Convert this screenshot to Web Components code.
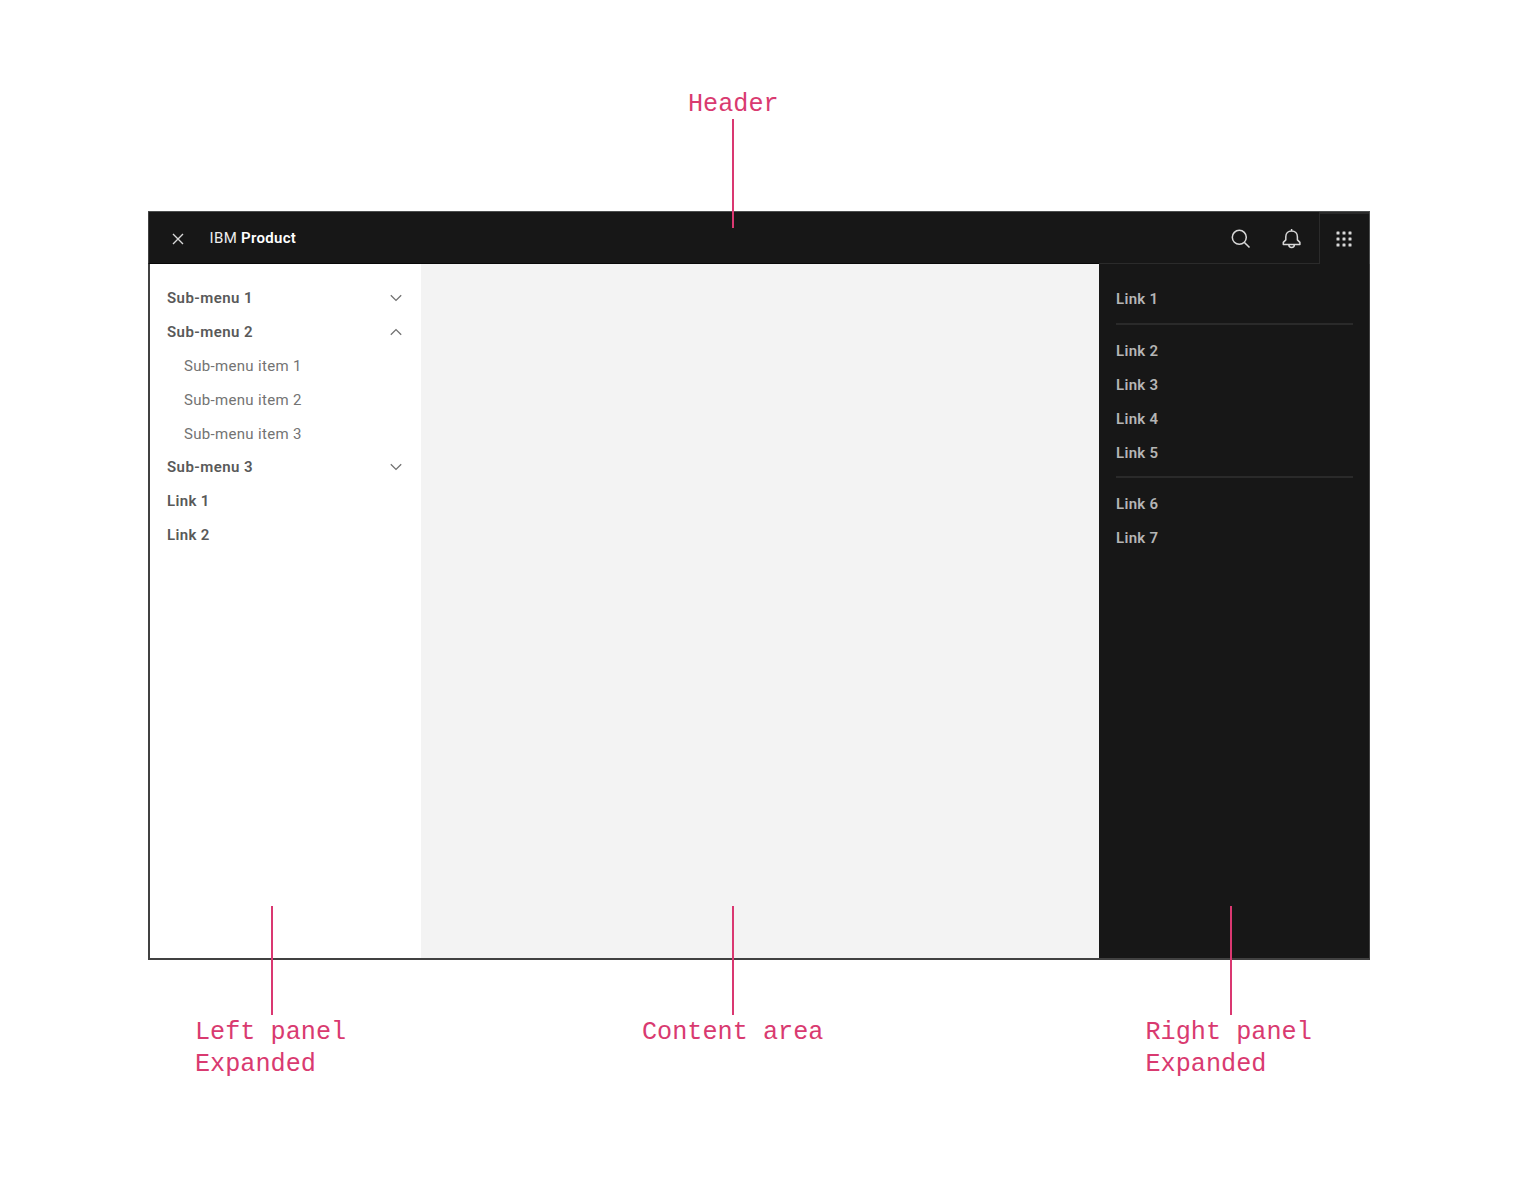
<!DOCTYPE html>
<html lang="en">
<head>
<meta charset="utf-8">
<title>UI shell anatomy</title>
<style>
body{margin:0;background:#fff;font-family:Roboto,"Liberation Sans",sans-serif}
</style>
</head>
<body>
<shell-anatomy></shell-anatomy>
<script>
const define = (name, html, ready) => customElements.define(name, class extends HTMLElement {
  constructor() {
    super();
    this.attachShadow({ mode: 'open' }).innerHTML = html;
  }
  connectedCallback() { if (ready) ready(this, this.shadowRoot); }
});

// Text whose tracking is spread so that the line takes the width in "span".
define('tracked-text', `<style>
  :host{display:inline-block;white-space:pre;flex:none}
  span{display:inline-block}
</style><span><slot></slot></span>`, (el, root) => {
  const s = root.querySelector('span');
  const n = el.textContent.length;
  s.style.letterSpacing = ((+el.getAttribute('span') - s.getBoundingClientRect().width) / n) + 'px';
});

const icons = {
  close: '<svg width="12" height="12" viewBox="0 0 12 12"><path d="M1 1l10 10M11 1L1 11" stroke-width="1.4"/></svg>',
  down: '<svg width="12" height="8" viewBox="0 0 12 8"><path d="M.8 1.3L6 6.4l5.2-5.1" stroke-width="1.3"/></svg>',
  up: '<svg width="12" height="8" viewBox="0 0 12 8"><path d="M.8 6.7L6 1.6l5.2 5.1" stroke-width="1.3"/></svg>',
  search: '<svg width="20" height="20" viewBox="0 0 20 20"><circle cx="8.3" cy="8.3" r="7" stroke-width="1.5"/><path d="M13.2 13.2l5.3 5.3" stroke-width="1.6"/></svg>',
  bell: '<svg width="20" height="20" viewBox="0 0 20 20"><path d="M9.6 0v1.9M9.6 1.9c-3.4 0-5.8 2.5-5.8 5.8v3.2l-2.5 2.5v2h16.6v-2l-2.5-2.5V7.7c0-3.3-2.4-5.8-5.8-5.8zM6.8 15.6c0 1.8 1.2 3 2.8 3s2.8-1.2 2.8-3" stroke-width="1.5" stroke-linejoin="round"/></svg>',
  apps: '<svg width="16" height="16" viewBox="0 0 16 16"><g fill="currentColor" stroke="none">' +
    [0.5, 6.5, 12.5].map(y => [0.5, 6.5, 12.5].map(x => `<rect x="${x}" y="${y}" width="3" height="3" rx=".5"/>`).join('')).join('') + '</g></svg>'
};
define('shell-icon', `<style>:host{display:block;line-height:0;flex:none}svg{display:block;fill:none;stroke:currentColor}</style><div></div>`,
  (el, root) => { root.querySelector('div').innerHTML = icons[el.getAttribute('name')]; });

define('shell-header', `<style>
  :host{display:flex;height:53px;box-sizing:border-box;background:#171717;border:solid #4c4e4e;border-width:1px 1px 0 0;color:#d8d8d8}
  .bar{flex:1;display:flex;align-items:center;box-sizing:border-box;border-bottom:1px solid #080808;border-left:1px solid #414141;padding-left:22.6px}
  .name{display:flex;margin-left:26px;font-size:15px;line-height:20px;color:#eee}
  b{font-weight:600;color:#fff}
  .tools{display:flex;align-items:center;justify-content:flex-end;gap:31px;box-sizing:border-box;width:221px;padding:2px 17.5px 0 0;border:solid #2b2b2b;border-width:0 1px 1px 0}
  .apps{width:49px;box-sizing:border-box;border-top:2px solid #292929;display:flex;align-items:center;justify-content:center;padding-right:1px}
  .close{padding-top:2px}
</style>
<div class="bar"><shell-icon class="close" name="close"></shell-icon>
<div class="name"><tracked-text span="31.5">IBM </tracked-text><b><tracked-text span="55">Product</tracked-text></b></div></div>
<div class="tools"><shell-icon name="search"></shell-icon><shell-icon name="bell"></shell-icon></div>
<div class="apps"><shell-icon name="apps"></shell-icon></div>`);

define('nav-row', `<style>
  :host{display:flex;align-items:center;justify-content:space-between;height:33.86px;font-size:15px;font-weight:600;line-height:20px}
  :host([sub]){padding-left:17px;font-weight:400}
</style><slot></slot><slot name="icon"></slot>`);

define('left-panel', `<style>
  :host{display:block;width:271px;box-sizing:border-box;padding:17.2px 19px 0 17px;background:#fff;color:#595959}
  nav-row[sub]{color:#737373}
  shell-icon{color:#707070}
</style>
<nav-row><tracked-text span="86">Sub-menu 1</tracked-text><shell-icon slot="icon" name="down"></shell-icon></nav-row>
<nav-row><tracked-text span="86">Sub-menu 2</tracked-text><shell-icon slot="icon" name="up"></shell-icon></nav-row>
<nav-row sub><tracked-text span="117.7">Sub-menu item 1</tracked-text></nav-row>
<nav-row sub><tracked-text span="117.7">Sub-menu item 2</tracked-text></nav-row>
<nav-row sub><tracked-text span="117.7">Sub-menu item 3</tracked-text></nav-row>
<nav-row><tracked-text span="86">Sub-menu 3</tracked-text><shell-icon slot="icon" name="down"></shell-icon></nav-row>
<nav-row><tracked-text span="42.7">Link 1</tracked-text></nav-row>
<nav-row><tracked-text span="42.7">Link 2</tracked-text></nav-row>`);

const link = n => `<nav-row><tracked-text span="42.5">Link ${n}</tracked-text></nav-row>`;
define('right-panel', `<style>
  :host{display:block;width:270px;box-sizing:border-box;padding:18.2px 16px 0 17px;background:#171717;color:#b5b5b5}
  hr{border:0;height:2px;background:#2a2a2a;margin:7px 0 9px}
</style>${link(1)}<hr>${[2, 3, 4, 5].map(link).join('')}<hr>${[6, 7].map(link).join('')}`);

define('shell-frame', `<style>
  :host{display:flex;flex-direction:column;width:1222px;height:749px;box-sizing:border-box;background:#171717}
  .body{flex:1;display:flex;box-sizing:border-box;border:solid #414141;border-width:0 1px 2px 2px}
  main{flex:1;background:#f3f3f3}
</style><shell-header></shell-header>
<div class="body"><left-panel></left-panel><main></main><right-panel></right-panel></div>`);

define('call-out', `<style>
  :host{display:flex;flex-direction:column;color:#d93a70;font:25.2px/32px "Liberation Mono",monospace;white-space:pre}
  i{width:2px;height:109px;background:#da3871;margin-left:var(--line)}
  div{padding-top:2px}
  :host([top]) i{order:1;margin-top:-2px}
</style><i></i><div><slot></slot></div>`);

define('shell-anatomy', `<style>
  :host{display:block;width:1534px;height:1177px;box-sizing:border-box;padding:87px 0 0 148px}
  .top{display:flex;position:relative;z-index:1;margin:0 0 -17px 540px;height:141px}
  .bottom{display:flex;position:relative;z-index:1;margin:-54px 0 0 47px}
  call-out{flex:none}
</style>
<div class="top"><call-out top style="--line:44.4px">Header</call-out></div>
<shell-frame></shell-frame>
<div class="bottom">
<call-out style="--line:76px;width:447px">Left panel
Expanded</call-out><call-out style="--line:90.4px;width:503.5px">Content area</call-out><call-out style="--line:84.5px">Right panel
Expanded</call-out>
</div>`);
</script>
</body>
</html>
